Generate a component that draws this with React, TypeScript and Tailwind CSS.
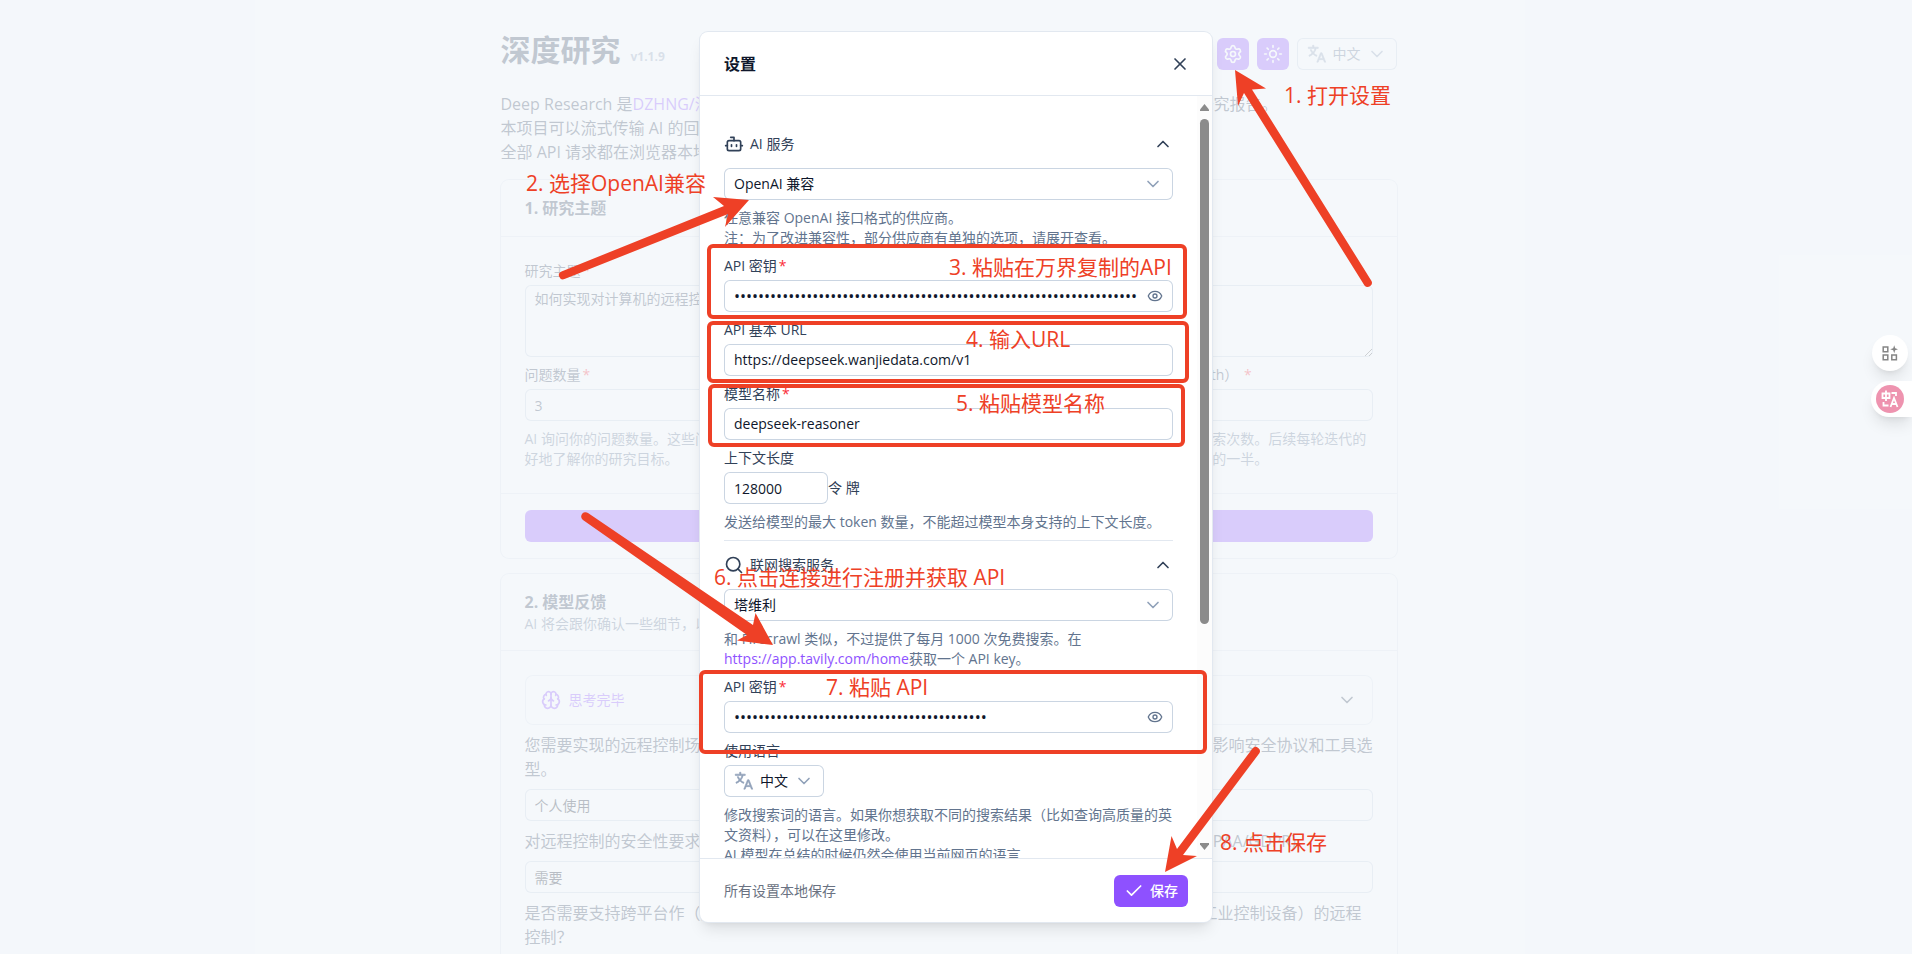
import { useId } from 'react';
import type { ReactNode } from 'react';
import { Bot, Brain, Check, ChevronDown, ChevronUp, Eye, Search, Settings, Sun, X } from 'lucide-react';

const FONT = "font-['Open_Sans','Noto_Sans_CJK_SC',sans-serif]";

const ANNOTATIONS = [
  { text: '1. 打开设置', place: 'left-[1284px] top-[81px]' },
  { text: '2. 选择OpenAI兼容', place: 'left-[526px] top-[169px]' },
  { text: '3. 粘贴在万界复制的API', place: 'left-[949px] top-[253px]' },
  { text: '4. 输入URL', place: 'left-[966px] top-[325px]' },
  { text: '5. 粘贴模型名称', place: 'left-[956px] top-[389px]' },
  { text: '6. 点击连接进行注册并获取 API', place: 'left-[714px] top-[563px]' },
  { text: '7. 粘贴 API', place: 'left-[826px] top-[673px]' },
  { text: '8. 点击保存', place: 'left-[1220px] top-[828px]' },
];

const FRAMES = [
  'left-[707px] top-[244px] w-[480px] h-[75px]',
  'left-[707px] top-[321px] w-[482px] h-[62px]',
  'left-[708px] top-[384px] w-[477px] h-[63px]',
  'left-[699px] top-[670px] w-[508px] h-[84px]',
];

function TranslateIcon({ className }: { className?: string }) {
  return (
    <svg viewBox="0 0 32 32" fill="currentColor" stroke="currentColor" strokeWidth="1" className={className} aria-hidden="true">
      <path d="M27.85 29H30l-6-15h-2.35l-6 15h2.15l1.6-4h6.85zm-7.65-6l2.62-6.56L25.45 23zM18 7V5h-7V2H9v3H2v2h10.74a14.71 14.71 0 0 1-3.19 6.18A13.5 13.5 0 0 1 7.26 9h-2.1a16.47 16.47 0 0 0 3 5.58A16.84 16.84 0 0 1 3 18l.75 1.86A18.47 18.47 0 0 0 9.53 16a16.92 16.92 0 0 0 5.76 3.84L16 18a14.48 14.48 0 0 1-5.12-3.37A17.64 17.64 0 0 0 14.8 7z" />
    </svg>
  );
}

function Required() {
  return <span className="ml-0.5 text-red-500">*</span>;
}

function LanguageButton({ muted }: { muted?: boolean }) {
  return (
    <button className={`flex h-8 w-[100px] items-center rounded-md bg-white px-2.5 text-sm ring-1 ring-inset ring-slate-300 ${muted ? 'text-slate-500' : 'text-slate-900'}`}>
      <TranslateIcon className="size-5 text-slate-400" />
      <span className="ml-1.5">中文</span>
      <ChevronDown className="ml-auto size-5 text-slate-400" strokeWidth={2} />
    </button>
  );
}

function SelectBox({ label, value }: { label: string; value: string }) {
  return (
    <div className="relative">
      <select aria-label={label} defaultValue={value} className="block h-8 w-full appearance-none rounded-md bg-white px-2.5 text-sm text-slate-900 ring-1 ring-inset ring-slate-300">
        <option>{value}</option>
      </select>
      <ChevronDown className="pointer-events-none absolute right-2.5 top-1.5 size-5 text-slate-400" strokeWidth={2} />
    </div>
  );
}

function Section({ icon, title, children }: { icon: ReactNode; title: string; children: ReactNode }) {
  return (
    <section className="border-b border-slate-200 pb-2 last:border-b-0">
      <button className="flex w-full items-center gap-1.5 py-3.5 text-sm text-slate-700">
        {icon}
        <span>{title}</span>
        <ChevronUp className="ml-auto size-5" strokeWidth={2} />
      </button>
      <div className="flex flex-col gap-2">{children}</div>
    </section>
  );
}

type FieldProps = {
  label: string;
  value: string;
  required?: boolean;
  secret?: boolean;
};

function Field({ label, value, required, secret }: FieldProps) {
  const id = useId();
  return (
    <div>
      <label htmlFor={id} className="mb-1 block text-sm text-slate-700">
        {label}
        {required && <Required />}
      </label>
      <div className="flex h-8 items-center rounded-md bg-white px-2.5 ring-1 ring-inset ring-slate-300">
        <input
          id={id}
          type={secret ? 'password' : 'text'}
          defaultValue={value}
          className={`min-w-0 flex-1 bg-transparent text-slate-900 outline-none ${secret ? 'text-base' : 'text-sm'}`}
        />
        {secret && (
          <button aria-label="显示密钥" className="ml-2.5 text-slate-500">
            <Eye className="size-4" strokeWidth={2} />
          </button>
        )}
      </div>
    </div>
  );
}

function Question({ text, answer }: { text: string; answer: string }) {
  const id = useId();
  return (
    <div>
      <label htmlFor={id} className="mb-2 block text-slate-700">{text}</label>
      <input id={id} defaultValue={answer} className="block h-8 w-full rounded-md px-2.5 text-sm text-slate-900 ring-1 ring-inset ring-slate-300" />
    </div>
  );
}

function Page() {
  return (
    <div className="pr-[15px]">
      <main className="mx-auto max-w-4xl pt-8 text-slate-700">
        <header className="flex items-start">
          <h1 className="flex items-baseline gap-2.5 text-3xl font-bold">
            深度研究
            <span className="text-xs text-slate-400">v1.1.9</span>
          </h1>
          <div className="ml-auto flex gap-2 pt-1.5">
            <button aria-label="设置" className="flex size-8 items-center justify-center rounded-md bg-violet-500 text-white">
              <Settings className="size-5" strokeWidth={2} />
            </button>
            <button aria-label="主题" className="flex size-8 items-center justify-center rounded-md bg-violet-500 text-white">
              <Sun className="size-5" strokeWidth={2} />
            </button>
            <LanguageButton muted />
          </div>
        </header>

        <p className="mt-[22px] leading-6">
          Deep Research 是<a href="#repo" className="text-violet-500">DZHNG/深度研究</a>的可视化界面，使用 AI 对任意主题进行多轮深入研究，并生成研究报告。
          <br />
          本项目可以流式传输 AI 的回答，实时展示研究过程。
          <br />
          全部 API 请求都在浏览器本地完成。
        </p>

        <section className="mt-4 rounded-lg ring-1 ring-slate-200">
          <h2 className="px-6 py-4 font-bold">1. 研究主题</h2>
          <div className="border-t border-slate-200 p-6">
            <label htmlFor="topic" className="mb-1 block text-sm">研究主题<Required /></label>
            <textarea id="topic" defaultValue="如何实现对计算机的远程控制" className="block h-[72px] w-full rounded-md px-2.5 py-1 text-sm ring-1 ring-inset ring-slate-300" />
            <div className="mt-2 grid grid-cols-2 gap-4">
              <div>
                <label htmlFor="count" className="mb-1 block text-sm">问题数量<Required /></label>
                <input id="count" defaultValue="3" className="block h-8 w-full rounded-md px-2.5 text-sm ring-1 ring-inset ring-slate-300" />
                <p className="mt-2 text-sm text-slate-500">
                  AI 询问你的问题数量。这些问题可以帮助 AI 更
                  <br />
                  好地了解你的研究目标。
                </p>
              </div>
              <div>
                <label htmlFor="depth" className="mb-1 block text-sm">研究深度，即每个主题迭代的轮数 （Depth） <Required /></label>
                <input id="depth" defaultValue="2" className="block h-8 w-full rounded-md px-2.5 text-sm ring-1 ring-inset ring-slate-300" />
                <p className="mt-2 text-sm text-slate-500">
                  决定研究迭代的轮数， 以及每一轮里的搜索次数。后续每轮迭代的
                  <br />
                  搜索次数会依次减少， 即减为上一轮次数的一半。
                </p>
              </div>
            </div>
          </div>
          <div className="border-t border-slate-200 px-6 py-4">
            <button className="block h-8 w-full rounded-md bg-violet-500 text-sm text-white">开始研究</button>
          </div>
        </section>

        <section className="mt-4 rounded-lg ring-1 ring-slate-200">
          <div className="px-6 py-4">
            <h2 className="font-bold">2. 模型反馈</h2>
            <p className="text-sm text-slate-500">AI 将会跟你确认一些细节，以便更好地研究。</p>
          </div>
          <div className="flex flex-col gap-2 border-t border-slate-200 p-6">
            <button className="flex h-[50px] items-center gap-2 rounded-lg px-4 text-sm text-violet-500 ring-1 ring-inset ring-slate-200">
              <Brain className="size-5" strokeWidth={2} />
              思考完毕
              <ChevronDown className="ml-auto size-5 text-slate-700" strokeWidth={2} />
            </button>
            <Question text="您需要实现的远程控制场景是什么（例如个人使用、企业远程运维、远程技术支持等）？这将直接影响安全协议和工具选型。" answer="个人使用" />
            <Question text="对远程控制的安全性要求如何？例如是否需要端到端加密、多因素认证，或满足行业合规标准（HIPAA/GDPR)" answer="需要" />
            <Question text="是否需要支持跨平台作（如 Windows 控制 Linux 或移动端设备），或对特殊设备（嵌入式系统、工业控制设备）的远程控制？" answer="" />
          </div>
        </section>
      </main>
    </div>
  );
}

function SettingsDialog() {
  return (
    <div role="dialog" aria-label="设置" className="flex h-full w-full max-w-lg flex-col overflow-hidden rounded-lg bg-white shadow-lg ring-1 ring-slate-200">
      <header className="flex h-16 shrink-0 items-center border-b border-slate-200 px-6">
        <h2 className="font-semibold text-slate-900">设置</h2>
        <button aria-label="关闭" className="-mr-0.5 ml-auto text-slate-700">
          <X className="size-5" strokeWidth={2} />
        </button>
      </header>

      <div className="flex min-h-0 flex-1">
        <div className="min-w-0 flex-1 overflow-hidden px-6 pt-6">
          <Section icon={<Bot className="size-5" strokeWidth={2} />} title="AI 服务">
            <SelectBox label="AI 服务" value="OpenAI 兼容" />
            <p className="text-sm text-slate-500">
              任意兼容 OpenAI 接口格式的供应商。
              <br />
              注：为了改进兼容性，部分供应商有单独的选项，请展开查看。
            </p>
            <Field label="API 密钥" value={'x'.repeat(72)} required secret />
            <Field label="API 基本 URL" value="https://deepseek.wanjiedata.com/v1" />
            <Field label="模型名称" value="deepseek-reasoner" required />
            <div>
              <label htmlFor="context" className="mb-1 block text-sm text-slate-700">上下文长度</label>
              <div className="flex items-center text-sm text-slate-700">
                <input id="context" defaultValue="128000" className="h-8 w-26 rounded-md px-2.5 text-slate-900 ring-1 ring-inset ring-slate-300" />
                令 牌
              </div>
            </div>
            <p className="text-sm text-slate-500">发送给模型的最大 token 数量，不能超过模型本身支持的上下文长度。</p>
          </Section>

          <Section icon={<Search className="size-5" strokeWidth={2} />} title="联网搜索服务">
            <SelectBox label="联网搜索服务" value="塔维利" />
            <p className="text-sm text-slate-500">
              和 Firecrawl 类似，不过提供了每月 1000 次免费搜索。在
              <br />
              <a href="#tavily" className="text-violet-500">https://app.tavily.com/home</a>获取一个 API key。
            </p>
            <Field label="API 密钥" value={'x'.repeat(42)} required secret />
            <div>
              <p className="mb-1 text-sm text-slate-700">使用语言</p>
              <LanguageButton />
            </div>
            <p className="text-sm text-slate-500">
              修改搜索词的语言。如果你想获取不同的搜索结果（比如查询高质量的英文资料），可以在这里修改。
              <br />
              AI 模型在总结的时候仍然会使用当前网页的语言
            </p>
          </Section>
        </div>

        {/* Scrollbar */}
        <div className="flex w-[15px] shrink-0 flex-col items-center bg-[#fcfcfc] py-2 text-[#8b8b8b]">
          <svg viewBox="0 0 9 7" className="h-[7px] w-[9px]" fill="currentColor"><path d="M4.500 0L9 5.500V7H0V5.500z" /></svg>
          <div className="mt-2 h-[505px] w-[9px] rounded-full bg-[#8b8b8b]" />
          <svg viewBox="0 0 9 7" className="mt-auto h-[7px] w-[9px]" fill="currentColor"><path d="M4.500 7L9 1.500V0H0V1.500z" /></svg>
        </div>
      </div>

      <footer className="flex h-16 shrink-0 items-center border-t border-slate-200 px-6 text-sm">
        <p className="text-gray-500">所有设置本地保存</p>
        <button className="ml-auto flex h-8 items-center gap-1.5 rounded-md bg-violet-500 px-2.5 font-medium text-white">
          <Check className="size-5" strokeWidth={2} />
          保存
        </button>
      </footer>
    </div>
  );
}

function FloatingTools() {
  return (
    <div className="absolute right-0 top-[335px] flex flex-col items-end gap-2.5">
      <button aria-label="小组件" className="mr-1 flex size-9 items-center justify-center rounded-full bg-white text-[#858585] shadow-lg">
        <svg viewBox="0 0 16 16" className="size-4" fill="none" stroke="currentColor" strokeWidth="1.500">
          <path d="M1.200 2h4.600v4.800H1.200zM1.200 10h4.600v4.800H1.200zM9.800 10h4.600v4.800H9.800z" />
          <path d="M12.200 .300l1 3 3 1-3 1-1 3-1-3-3-1 3-1z" fill="currentColor" stroke="none" />
        </svg>
      </button>
      <button aria-label="翻译" className="flex h-9 w-[41px] items-center rounded-l-full bg-white pl-[5px] shadow-lg">
        <svg viewBox="0 0 28 28" className="size-7">
          <circle cx="14" cy="14" r="14" fill="#ee93af" />
          <g fill="none" stroke="#fff" strokeWidth="1.800">
            <path d="M6.500 8.500h7v4.500h-7zM10 5.500v10.500M15.500 8h4.500v3M7.500 17v3.500h5" />
            <path d="M14.500 22l3.500-9 3.500 9M15.500 19h5" />
          </g>
        </svg>
      </button>
    </div>
  );
}

function Annotations() {
  return (
    <div className="pointer-events-none absolute left-1/2 top-0 h-full w-[1912px] -translate-x-1/2 text-[#ee4026]">
      {FRAMES.map((frame) => (
        <div key={frame} className={`absolute rounded-md border-4 border-[#ee4026] ${frame}`} />
      ))}
      <svg viewBox="0 0 1912 954" className="absolute left-0 top-0 h-[954px] w-[1912px]" fill="currentColor" aria-hidden="true">
        <path d="M1235 70L1266 88.500L1252 89.500L1371.500 281A4.200 4.200 0 0 1 1364.500 285.500L1244 93L1238 106z" />
        <path d="M749 200L713 197L724 206L561.500 271.500A4 4 0 0 0 564.500 279L728 214L725 227z" />
        <path d="M773 645L755.500 613L753 625L588 513A4.200 4.200 0 0 0 583 520L747 635L737 640.500z" />
        <path d="M1165 872L1171.500 836L1177 849L1252.500 748.500A4.200 4.200 0 0 1 1259.500 753L1183 855L1197 856z" />
      </svg>
      {ANNOTATIONS.map((note) => (
        <p key={note.text} className={`absolute whitespace-nowrap text-[21px] leading-7 ${note.place}`}>{note.text}</p>
      ))}
    </div>
  );
}

export default function App() {
  return (
    <div className={`relative h-screen overflow-hidden bg-white text-base ${FONT}`}>
      <Page />
      <div className="absolute inset-0 flex justify-center bg-slate-100/75 py-8">
        <SettingsDialog />
      </div>
      <FloatingTools />
      <Annotations />
    </div>
  );
}
